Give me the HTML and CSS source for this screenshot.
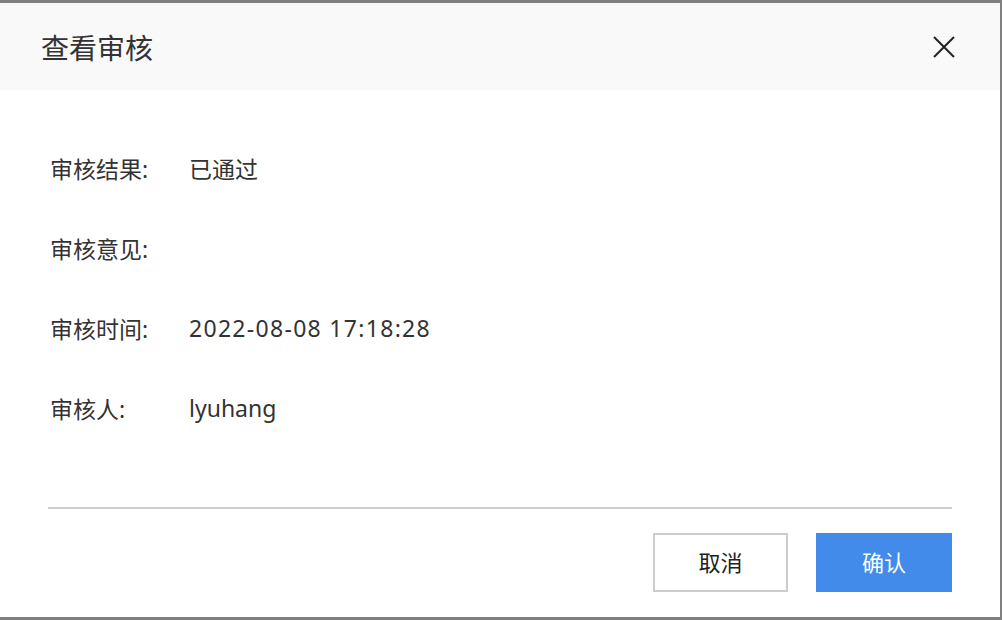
FILE: index.html
```html
<!DOCTYPE html>
<html lang="zh-CN">
<head>
  <meta charset="UTF-8">
  <meta name="viewport" content="width=device-width, initial-scale=1.0">
  <title>查看审核</title>
  <link rel="stylesheet" href="styles.css">
</head>
<body>
  <div class="dialog">
    <div class="dialog-header">
      <h2 class="dialog-title">查看审核</h2>
      <button class="close-button" aria-label="关闭">
        <svg width="22" height="22" viewBox="0 0 22 22">
          <path d="M1 1 L21 21 M21 1 L1 21" stroke="#222" stroke-width="2" fill="none"/>
        </svg>
      </button>
    </div>

    <div class="dialog-body">
      <div class="info-row">
        <span class="info-label">审核结果:</span>
        <span class="info-value">已通过</span>
      </div>
      <div class="info-row">
        <span class="info-label">审核意见:</span>
        <span class="info-value"></span>
      </div>
      <div class="info-row">
        <span class="info-label">审核时间:</span>
        <span class="info-value time-value">2022-08-08 17:18:28</span>
      </div>
      <div class="info-row">
        <span class="info-label">审核人:</span>
        <span class="info-value">lyuhang</span>
      </div>
    </div>

    <div class="dialog-footer">
      <button class="btn btn-cancel">取消</button>
      <button class="btn btn-confirm">确认</button>
    </div>
  </div>
</body>
</html>
```

FILE: styles.css
```css
body {
  margin: 0;
  background-color: #808080;
  font-family: "Noto Sans", "Noto Sans CJK SC", sans-serif;
  color: #333333;
  height: 620px;
  overflow: hidden;
}

.dialog {
  width: 1000px;
  height: 614px;
  margin-top: 3px;
  background-color: #ffffff;
  display: flex;
  flex-direction: column;
}

.dialog-header {
  height: 87px;
  background-color: #f9f9f9;
  display: flex;
  justify-content: space-between;
  align-items: center;
  padding: 0 45px 0 41px;
}

.dialog-title {
  margin: 0;
  font-size: 28px;
  font-weight: 400;
  color: #333333;
}

.close-button {
  background: none;
  border: none;
  padding: 0;
  width: 22px;
  height: 22px;
  cursor: pointer;
  display: flex;
}

.dialog-body {
  padding: 58px 50px 0;
  display: flex;
  flex-direction: column;
  gap: 40px;
  flex: 1;
}

.info-row {
  display: flex;
  height: 40px;
  align-items: center;
  font-size: 23px;
}

.info-label {
  width: 139px;
  color: #333333;
}

.info-value {
  color: #333333;
}

.time-value {
  letter-spacing: 1.3px;
}

.dialog-footer {
  margin: 0 48px;
  border-top: 2px solid #cccccc;
  padding: 24px 0 25px;
  display: flex;
  justify-content: flex-end;
  gap: 28px;
}

.btn {
  width: 136px;
  height: 59px;
  padding: 0 0 4px;
  font-family: inherit;
  font-size: 22px;
  cursor: pointer;
  border-radius: 0;
}

.btn-cancel {
  width: 135px;
  background-color: #ffffff;
  border: 2px solid #cccccc;
  color: #222222;
}

.btn-confirm {
  background-color: #428bea;
  border: none;
  color: #ffffff;
}
```
